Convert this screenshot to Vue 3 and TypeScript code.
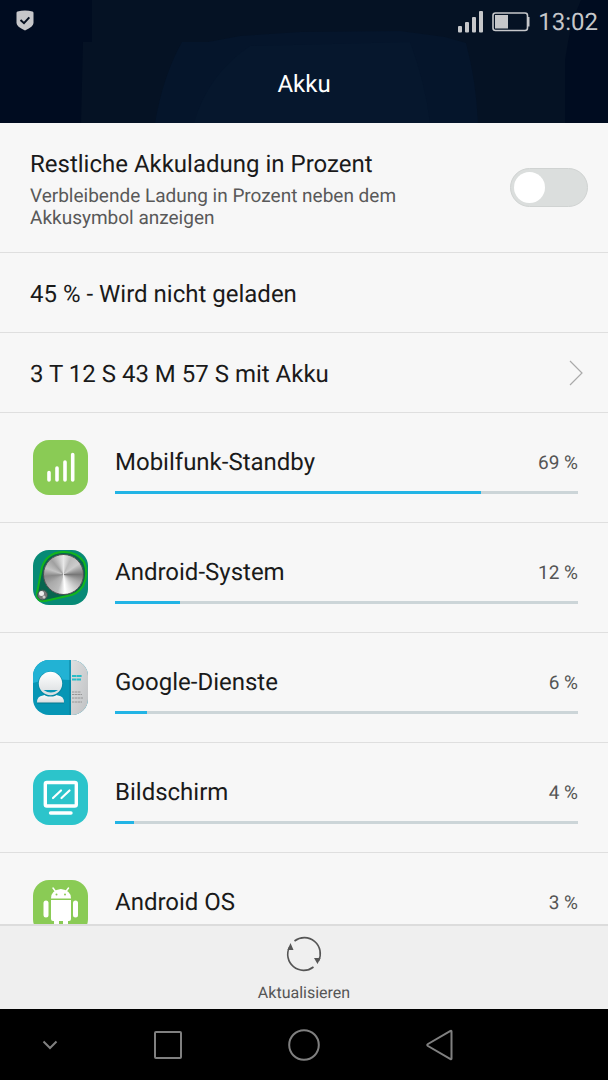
<script setup lang="ts">
import { ref } from 'vue'

type IconName = 'signal' | 'system' | 'contact' | 'display' | 'android'

interface Consumer {
  name: string
  share: number
  bar: number
  icon: IconName
}

const showPercent = ref(false)

const consumers: Consumer[] = [
  { name: 'Mobilfunk-Standby', share: 69, bar: 79, icon: 'signal' },
  { name: 'Android-System', share: 12, bar: 14, icon: 'system' },
  { name: 'Google-Dienste', share: 6, bar: 7, icon: 'contact' },
  { name: 'Bildschirm', share: 4, bar: 4, icon: 'display' },
  { name: 'Android OS', share: 3, bar: 3, icon: 'android' },
]
</script>

<template>
  <div class="screen">
    <header class="header">
      <svg class="backdrop" viewBox="0 0 608 123" preserveAspectRatio="none" aria-hidden="true">
        <path d="M92 0H581L572 22L568 42L565 60V123H81L83 42H92Z" fill="#051224" />
        <path d="M155 123Q163 76 182 42H208L240 36L300 32L400 31L445 37L466 43Q476 80 478 123Z" fill="#05152b" />
        <path d="M194 123Q208 74 250 46L410 42Q425 82 430 123Z" fill="#06172d" />
      </svg>
      <div class="status">
        <svg class="shield" width="18" height="21" viewBox="0 0 18 21" aria-label="Geschützt">
          <path d="M1.5 1.6Q9 -.6 16.5 1.6Q17.5 1.9 17.5 3V13Q17.500 16.500 9 20.500Q.5 16.500 .5 13V3Q.5 1.900 1.500 1.600Z" fill="#c6c7ca" />
          <path d="M4.500 10L8 13.200L13.300 7.300" fill="none" stroke="#061020" stroke-width="2" />
        </svg>
        <svg class="bars" width="26" height="22" viewBox="0 0 26 22" aria-label="Signalstärke">
          <g fill="#c6c7ca">
            <rect x="0" y="15" width="4" height="6.500" rx="1" />
            <rect x="7" y="11" width="4" height="10.500" rx="1" />
            <rect x="14" y="6" width="4" height="15.500" rx="1" />
            <rect x="21" y="0" width="4" height="21.500" rx="1" />
          </g>
        </svg>
        <svg class="battery" width="39" height="20" viewBox="0 0 39 20" aria-label="Akku 45 Prozent">
          <rect x="1" y="1" width="34.500" height="17.500" rx="2.500" fill="none" stroke="#c6c7ca" stroke-width="1.600" />
          <rect x="3" y="3" width="13" height="13.500" fill="#c6c7ca" />
          <path d="M35.500 5H37.500V14.500H35.500Z" fill="#c6c7ca" />
        </svg>
        <time class="clock">13:02</time>
      </div>
      <h1 class="title">Akku</h1>
    </header>

    <main class="content">
      <label class="row setting">
        <span class="setting-text">
          <span class="label">Restliche Akkuladung in Prozent</span>
          <span class="hint">Verbleibende Ladung in Prozent neben dem Akkusymbol anzeigen</span>
        </span>
        <input v-model="showPercent" class="switch" type="checkbox" role="switch" />
      </label>

      <div class="row line">45 % - Wird nicht geladen</div>

      <button class="row line link" type="button">
        <span>3 T 12 S 43 M 57 S mit Akku</span>
        <svg width="14" height="28" viewBox="0 0 14 28" aria-hidden="true">
          <path d="M1 1L13 13L1 25" fill="none" stroke="#aaa" stroke-width="1.200" />
        </svg>
      </button>

      <ul class="list">
        <li v-for="item in consumers" :key="item.name" class="row consumer">
          <span class="tile" :class="item.icon">
            <svg v-if="item.icon === 'signal'" viewBox="0 0 55 55" aria-hidden="true">
              <path d="M16 32.500V40M24 28V40M32 22V40M39.700 14.500V40" stroke="#fff" stroke-width="3.600" stroke-linecap="round" />
            </svg>
            <template v-else-if="item.icon === 'system'">
              <svg viewBox="0 0 55 55" aria-hidden="true">
                <path d="M9 17Q14 3 29 2Q44 1 51 12Q56 24 50 36Q44 45 34 46L12 51Q3 52 4 43Z" fill="#08654f" stroke="#13b51d" stroke-width="2" />
                <circle cx="9.500" cy="45" r="5" fill="#777" stroke="#35594f" />
                <circle cx="8.500" cy="43.500" r="2.500" fill="#eee" />
                <circle cx="11" cy="47" r="1.500" fill="#ccc" />
              </svg>
              <span class="knob"></span>
            </template>
            <svg v-else-if="item.icon === 'contact'" viewBox="0 0 55 55" aria-hidden="true">
              <defs>
                <linearGradient id="paper" x1="0" y1="0" x2="1" y2="1">
                  <stop offset="0" stop-color="#dedfe0" />
                  <stop offset="1" stop-color="#bfc1c3" />
                </linearGradient>
                <linearGradient id="person" x1="0" y1="0" x2="0" y2="1">
                  <stop offset="0" stop-color="#fff" />
                  <stop offset="1" stop-color="#d9dddf" />
                </linearGradient>
              </defs>
              <path d="M0 0H38V20Q16 18 0 23Z" fill="#22b2d4" />
              <path d="M38 0H55V55H38Z" fill="url(#paper)" />
              <path d="M37 0V55" stroke="#087f9b" />
              <path d="M4 43.500Q4 37 10 36.500L14 35H20L25 36.500Q31 37 31 43.500Z" fill="#087990" />
              <path d="M4 42.500Q4 36 10 35.500L14 34H20L25 35.500Q31 36 31 42.500Z" fill="url(#person)" />
              <circle cx="17.500" cy="24" r="12.600" fill="#078ba7" />
              <circle cx="17.500" cy="23.500" r="11.700" fill="url(#person)" />
              <path d="M10.500 30H25Q18 35 10.500 30Z" fill="#0796b5" />
              <path d="M39 16H49M39 19.500H48" stroke="#29bdc7" stroke-width="1.800" stroke-dasharray="4 .4 5 .4" />
              <path d="M39 32H48M39 34.500H49M39 38H50M39 42H49" stroke="#888" stroke-width=".8" stroke-dasharray="2 .5 3 .5" />
            </svg>
            <svg v-else-if="item.icon === 'display'" viewBox="0 0 55 55" aria-hidden="true">
              <g fill="none" stroke="#fff" stroke-linecap="round">
                <rect x="12.300" y="12.500" width="31" height="23.500" rx="1.500" stroke-width="3.400" />
                <path d="M17.500 43H38" stroke-width="3.400" />
                <path d="M20 28L28 20.500M28.500 28L36.500 20.500" stroke-width="2.200" />
              </g>
            </svg>
            <svg v-else viewBox="0 0 55 55" aria-hidden="true">
              <g fill="#fff">
                <path d="M18 18.500Q18 10 27.800 9Q38 10 38 18.500Z" />
                <path d="M18 20H38V39Q38 41 36 41H35V49H30V41H26V49H21V41H20Q18 41 18 39Z" />
                <rect x="10.500" y="20.500" width="5" height="17" rx="2.500" />
                <rect x="40" y="20.500" width="5" height="17" rx="2.500" />
              </g>
              <path d="M20 8L23 12M35.500 8L32.500 12" stroke="#fff" stroke-width="1.500" stroke-linecap="round" />
              <circle cx="23.500" cy="14.500" r="1" fill="#8acb55" />
              <circle cx="32" cy="14.500" r="1" fill="#8acb55" />
            </svg>
          </span>
          <div class="usage">
            <div class="usage-head">
              <span class="label">{{ item.name }}</span>
              <span class="share">{{ item.share }} %</span>
            </div>
            <div class="track" role="progressbar" :aria-label="item.name" :aria-valuenow="item.share">
              <div class="fill" :style="{ width: item.bar + '%' }"></div>
            </div>
          </div>
        </li>
      </ul>
    </main>

    <footer class="toolbar">
      <button class="refresh" type="button">
        <svg width="36" height="36" viewBox="0 0 36 36" aria-hidden="true">
          <path d="M8.500 5A16 16 0 0 1 32.500 25M27.500 31A16 16 0 0 1 3.500 11" fill="none" stroke="#555" stroke-width="1.600" />
          <path d="M4.500 7L7.500 14H1.500ZM31.500 28L28 22H34.500Z" fill="#555" />
        </svg>
        <span>Aktualisieren</span>
      </button>
    </footer>

    <nav class="nav" aria-label="Navigation">
      <button type="button" aria-label="Leiste ausblenden">
        <svg width="16" height="10" viewBox="0 0 16 10"><path d="M1.500 1.500L8 8L14.500 1.500" /></svg>
      </button>
      <button type="button" aria-label="Übersicht">
        <svg width="30" height="30" viewBox="0 0 30 30"><rect x="2" y="2" width="26" height="26" rx="1" /></svg>
      </button>
      <button type="button" aria-label="Startbildschirm">
        <svg width="32" height="32" viewBox="0 0 32 32"><circle cx="16" cy="16" r="14.800" /></svg>
      </button>
      <button type="button" aria-label="Zurück">
        <svg width="30" height="32" viewBox="0 0 30 32"><path d="M26.500 2.500V29.500Q26.500 30.500 25.500 30L3 17Q1.500 16 3 15L25.500 2Q26.500 1.500 26.500 2.500Z" /></svg>
      </button>
    </nav>
  </div>
</template>

<style>
body {
  margin: 0;
}
</style>

<style scoped>
.screen {
  display: flex;
  flex-direction: column;
  height: 100vh;
  background: #f7f7f7;
  color: #1a1a1a;
  font-family: Roboto, "Liberation Sans", sans-serif;
  font-size: 24px;
  line-height: 28px;
  text-rendering: geometricPrecision;
}

button {
  margin: 0;
  padding: 0;
  border: 0;
  background: none;
  color: inherit;
  font: inherit;
  text-rendering: inherit;
}

svg {
  display: block;
  flex: none;
}

.header {
  position: relative;
  flex: none;
  padding-bottom: 25px;
  background: #000c20;
}

.backdrop {
  position: absolute;
  inset: 0;
  width: 100%;
  height: 100%;
}

.status {
  position: relative;
  display: flex;
  align-items: center;
  height: 44px;
  padding: 0 10px 0 16px;
  color: #c6c7ca;
}

.shield {
  margin-right: auto;
  margin-bottom: 3px;
}

.bars {
  margin-right: 8px;
  margin-bottom: 1px;
}

.battery {
  margin-right: 7px;
}

.title {
  position: relative;
  margin: 0;
  padding-top: 26px;
  color: #fff;
  font-size: 24px;
  font-weight: 400;
  text-align: center;
}

.content {
  flex: 1;
  min-height: 0;
  overflow: hidden;
}

.row {
  box-sizing: border-box;
  border-bottom: 1px solid #dfdfdf;
}

.setting {
  display: flex;
  align-items: flex-start;
  justify-content: space-between;
  padding: 27px 20px 23px 30px;
}

.setting-text {
  max-width: 400px;
}

.setting-text > span {
  display: block;
}

.hint {
  margin-top: 7px;
  color: #595959;
  font-size: 19px;
  line-height: 22px;
}

.switch {
  appearance: none;
  flex: none;
  box-sizing: border-box;
  width: 78px;
  height: 39px;
  margin: 18px 0 0;
  padding: 3px;
  border: 1px solid #d0d3d2;
  border-radius: 20px;
  background: #dbdedd;
}

.switch::before {
  content: "";
  display: block;
  width: 31px;
  height: 31px;
  border-radius: 50%;
  background: #fff;
}

.switch:checked {
  background: #22b4e5;
}

.switch:checked::before {
  margin-left: auto;
}

.line {
  display: flex;
  align-items: center;
  justify-content: space-between;
  width: 100%;
  height: 80px;
  padding: 2px 25px 0 30px;
  text-align: left;
}

.list {
  margin: 0;
  padding: 0;
  list-style: none;
}

.consumer {
  display: flex;
  gap: 27px;
  height: 110px;
  padding: 27px 30px 0 33px;
}

.tile {
  position: relative;
  flex: none;
  width: 55px;
  height: 55px;
  border-radius: 16px;
  overflow: hidden;
  background: #8acb55;
}

.tile.system {
  background: #078a76;
}

.tile.contact {
  background: #0796b5;
}

.tile.display {
  background: #2cc4cb;
}

.knob {
  position: absolute;
  top: 4px;
  left: 10px;
  box-sizing: border-box;
  width: 41px;
  height: 41px;
  border: 1px solid #555;
  border-radius: 50%;
  background: conic-gradient(#e8e8e8, #bbb 25deg, #ccc 55deg, #777 90deg, #aaa 115deg, #ddd 150deg, #fff 175deg, #bbb 200deg, #aaa 235deg, #888 265deg, #c4c4c4 290deg, #a0a0a0 320deg, #e8e8e8);
}

.usage {
  flex: 1;
  padding-top: 6px;
}

.usage-head {
  display: flex;
  align-items: center;
  justify-content: space-between;
}

.share {
  padding-top: 3px;
  color: #555;
  font-size: 19px;
}

.track {
  height: 3px;
  margin-top: 14px;
  background: #ccd5d8;
}

.fill {
  height: 100%;
  background: #22b4e5;
}

.toolbar {
  flex: none;
  border-top: 2px solid #dcdcdc;
  background: #efefef;
}

.refresh {
  display: flex;
  flex-direction: column;
  align-items: center;
  gap: 11px;
  width: 100%;
  padding: 10px 0 6px;
  color: #555;
  font-size: 16px;
  line-height: 20px;
}

.nav {
  display: grid;
  grid-template-columns: 1fr 136px 136px 136px 1fr;
  flex: none;
  height: 71px;
  background: #000;
}

.nav button {
  display: flex;
  align-items: center;
  justify-content: center;
}

.nav svg {
  fill: none;
  stroke: #808080;
  stroke-width: 2;
}
</style>
